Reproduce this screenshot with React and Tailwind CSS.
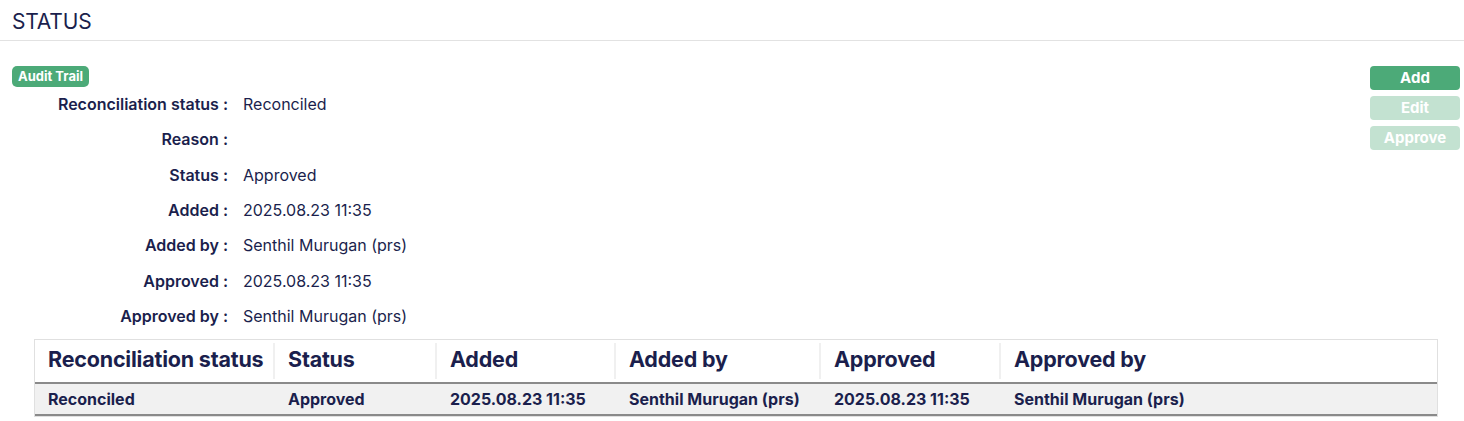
const details = [
  ["Reconciliation status", "Reconciled"],
  ["Reason", ""],
  ["Status", "Approved"],
  ["Added", "2025.08.23 11:35"],
  ["Added by", "Senthil Murugan (prs)"],
  ["Approved", "2025.08.23 11:35"],
  ["Approved by", "Senthil Murugan (prs)"],
];

const columns = [
  { label: "Reconciliation status", w: "w-[240px]" },
  { label: "Status", w: "w-[162px]" },
  { label: "Added", w: "w-[179px]" },
  { label: "Added by", w: "w-[205px]" },
  { label: "Approved", w: "w-[180px]" },
  { label: "Approved by", w: "flex-1" },
];

const row = [
  "Reconciled",
  "Approved",
  "2025.08.23 11:35",
  "Senthil Murugan (prs)",
  "2025.08.23 11:35",
  "Senthil Murugan (prs)",
];

export default function App() {
  return (
    <div className="w-[1464px] h-[421px] bg-white text-[#1b1f4d] font-['Inter',sans-serif] overflow-hidden">
      {/* Header */}
      <div className="h-[41px] border-b border-[#e2e2e2] px-3 flex items-center">
        <h1 className="text-[21px] leading-none tracking-[-0.2px] pt-[2px]">STATUS</h1>
      </div>

      <div className="flex justify-between pt-[24px]">
        {/* Detail list */}
        <div className="pl-3">
          <span className="inline-flex items-center h-[21px] px-[6px] rounded-[5px] bg-[#4caa78] text-white text-[13px] font-bold relative top-[-2px]">
            Audit Trail
          </span>
          <div className="mt-[-3px]">
            {details.map(([label, value]) => (
              <div key={label} className="flex h-[35.33px] items-center text-[16px]">
                <div className="w-[216px] text-right font-semibold whitespace-nowrap">{label} :</div>
                <div className="pl-[15px]">{value}</div>
              </div>
            ))}
          </div>
        </div>

        {/* Actions */}
        <div className="flex flex-col gap-[6px] pr-1 pt-[1px] w-[94px]">
          <button className="h-[24px] w-[90px] rounded-[4px] bg-[#4caa78] text-white text-[15px] font-bold">
            Add
          </button>
          <button className="h-[24px] w-[90px] rounded-[4px] bg-[#c3e2d1] text-white text-[15px] font-bold">
            Edit
          </button>
          <button className="h-[24px] w-[90px] rounded-[4px] bg-[#c3e2d1] text-white text-[15px] font-bold">
            Approve
          </button>
        </div>
      </div>

      {/* Table */}
      <div className="ml-[34px] mt-[5px] w-[1404px] border border-[#e0e0e0]">
        <div className="flex h-[44px] border-b-2 border-[#8a8a8a]">
          {columns.map((c, i) => (
            <div
              key={c.label}
              className={`${c.w} shrink-0 flex items-center pl-[13px] pb-[3px] whitespace-nowrap text-[21.5px] font-bold tracking-[-0.2px] ${
                i < columns.length - 1 ? "border-r-2 border-[#f0f0f0] my-[3px]" : ""
              }`}
            >
              {c.label}
            </div>
          ))}
        </div>
        <div className="flex h-[32px] bg-[#f1f1f1] border-b-2 border-[#8a8a8a]">
          {row.map((v, i) => (
            <div
              key={i}
              className={`${columns[i].w} shrink-0 flex items-center pl-[13px] whitespace-nowrap text-[16px] font-bold`}
            >
              {v}
            </div>
          ))}
        </div>
      </div>
    </div>
  );
}
